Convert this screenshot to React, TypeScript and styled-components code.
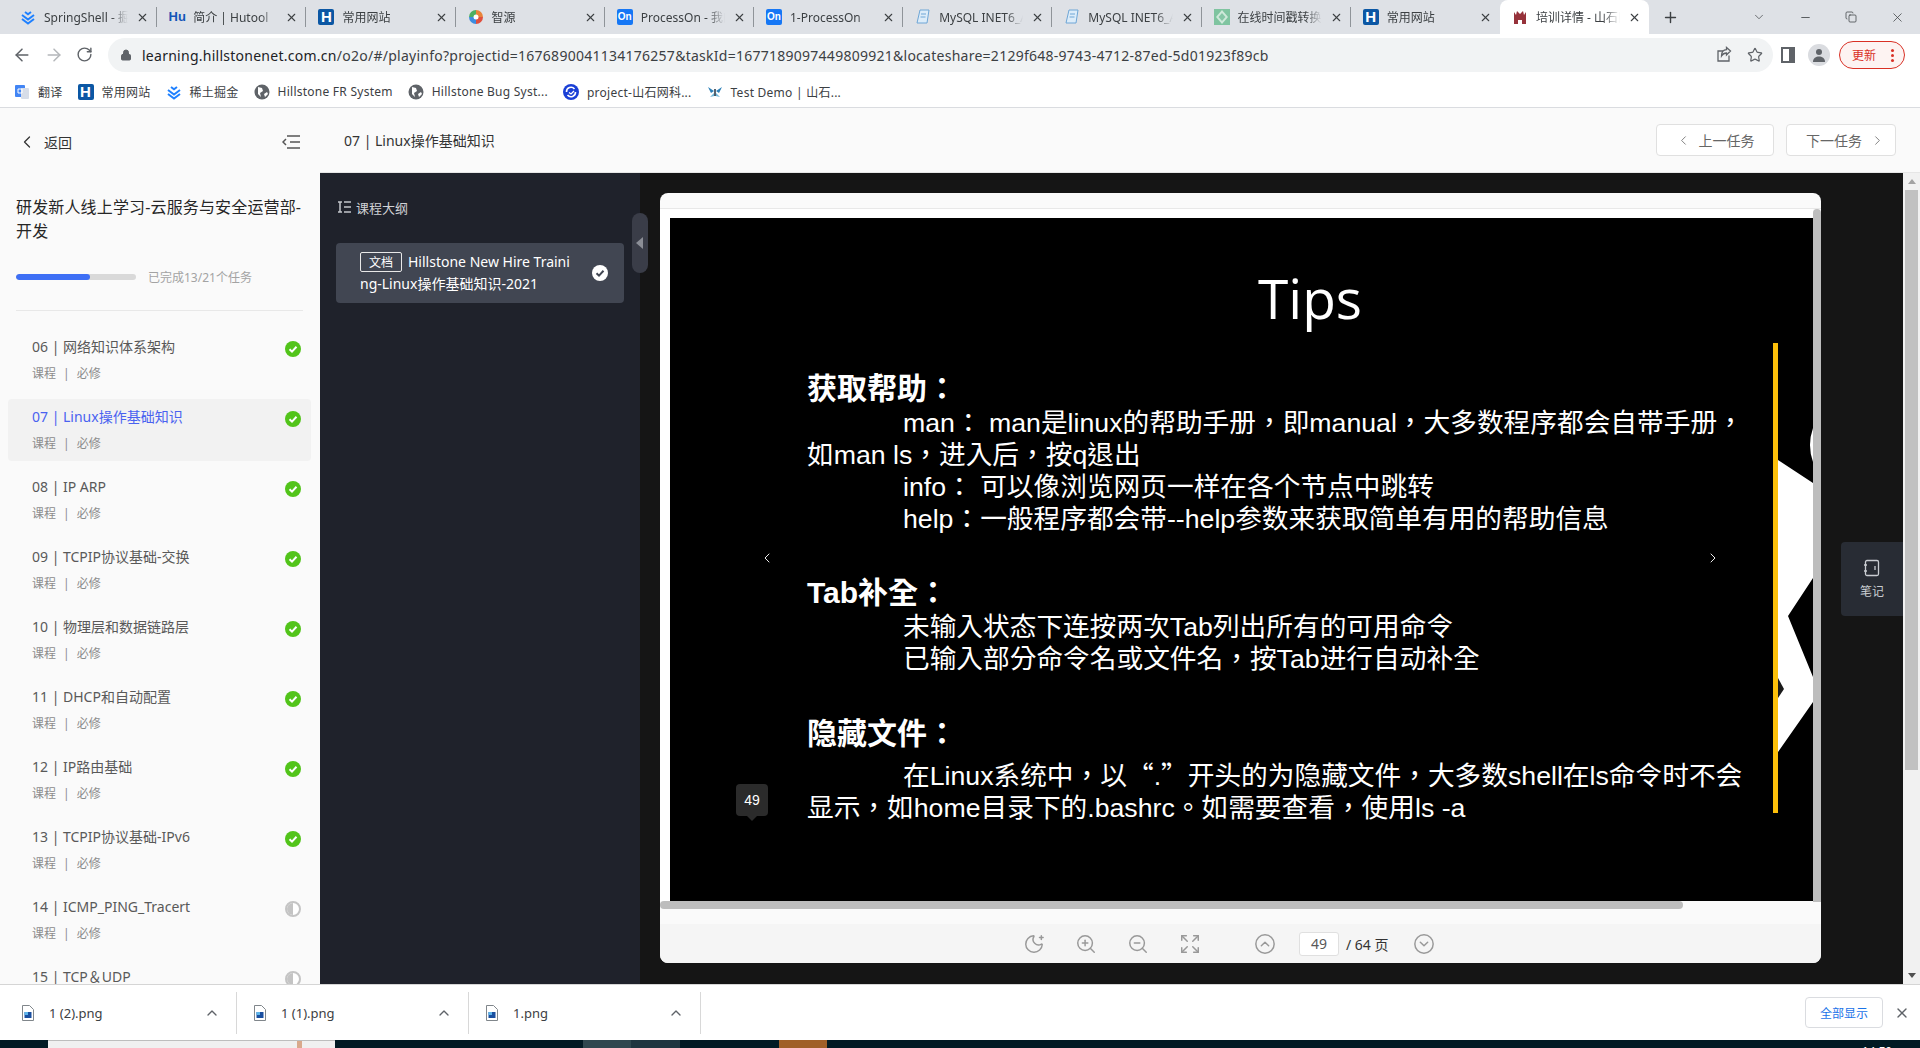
import React from 'react';
import styled, { createGlobalStyle } from 'styled-components';
import {
    ArrowLeft,
    ArrowRight,
    ChevronDown,
    ChevronLeft,
    ChevronRight,
    ChevronUp,
    CircleChevronDown,
    CircleChevronUp,
    Copy,
    Expand,
    Lock,
    Minus,
    MoonStar,
    Plus,
    RotateCw,
    Star,
    X,
    ZoomIn,
    ZoomOut,
} from 'lucide-react';

const uiFont = `"Noto Sans", "Noto Sans CJK SC", sans-serif`;
const slideFont = `"Liberation Sans", "Noto Sans CJK TC", sans-serif`;

const GlobalStyle = createGlobalStyle`
    html, body {
        margin: 0;
        padding: 0;
        background: #fff;
        overflow: hidden;
    }
    * {
        box-sizing: border-box;
    }
`;

const Page = styled.div`
    width: 1920px;
    height: 1048px;
    display: flex;
    flex-direction: column;
    overflow: hidden;
    font-family: ${uiFont};
`;

/* ---------- browser chrome ---------- */

const TabStrip = styled.div`
    height: 34px;
    flex: none;
    display: flex;
    background: #dee1e6;
    padding-left: 8px;
`;

const Tab = styled.div<{ $active?: boolean; $sep?: boolean }>`
    width: 149.2px;
    flex: none;
    display: flex;
    align-items: center;
    position: relative;
    padding: 0 8px 0 12px;
    gap: 8px;
    font-size: 12px;
    color: #3c4043;
    background: ${(p) => (p.$active ? '#fff' : 'transparent')};
    border-radius: ${(p) => (p.$active ? '8px 8px 0 0' : '0')};
    &::after {
        content: '';
        display: ${(p) => (p.$sep ? 'block' : 'none')};
        position: absolute;
        right: 0;
        top: 7px;
        height: 20px;
        width: 1px;
        background: #8f9499;
    }
`;

const TabTitle = styled.span`
    flex: 1;
    white-space: nowrap;
    overflow: hidden;
    mask-image: linear-gradient(to right, #000 80%, transparent 100%);
`;

const NewTab = styled.div`
    width: 42px;
    display: flex;
    align-items: center;
    justify-content: center;
    color: #3c4043;
`;

const WindowControls = styled.div`
    margin-left: auto;
    display: flex;
    align-items: center;
    color: #3c4043;
`;

const WindowButton = styled.div`
    width: 46px;
    display: flex;
    justify-content: center;
`;

const Toolbar = styled.div`
    height: 42px;
    flex: none;
    display: flex;
    align-items: center;
    background: #fff;
    padding: 0 8px 0 12px;
    color: #5f6368;
`;

const NavIcons = styled.div`
    display: flex;
    gap: 12px;
    width: 96px;
    flex: none;
`;

const UrlPill = styled.div`
    width: 1665px;
    height: 34px;
    flex: none;
    border-radius: 17px;
    background: #f1f3f4;
    display: flex;
    align-items: center;
    padding: 0 10px 0 12px;
    gap: 10px;
`;

const UrlText = styled.span`
    flex: 1;
    font-size: 14px;
    letter-spacing: 0.26px;
    color: #3c4043;
    white-space: nowrap;
`;

const Host = styled.span`
    color: #202124;
`;

const ProfileGroup = styled.div`
    display: flex;
    align-items: center;
    margin-left: 8px;
    gap: 9px;
`;

const SidePanelIcon = styled.div`
    width: 14px;
    height: 16px;
    border: 2px solid #5f6368;
    border-right-width: 6px;
    margin-right: 4px;
`;

const Avatar = styled.div`
    width: 22px;
    height: 22px;
    border-radius: 50%;
    background: #dadce0;
    display: flex;
    align-items: center;
    justify-content: center;
`;

const UpdatePill = styled.div`
    width: 66px;
    height: 28px;
    border: 1px solid #d93025;
    border-radius: 14px;
    background: #fdf3f2;
    color: #d93025;
    font-size: 12px;
    display: flex;
    align-items: center;
    justify-content: space-between;
    padding: 0 10px 0 12px;
`;

const Dots = styled.span`
    width: 3px;
    height: 3px;
    border-radius: 50%;
    background: #d93025;
    box-shadow: 0 -5px 0 #d93025, 0 5px 0 #d93025;
`;

const BookmarkBar = styled.div`
    height: 32px;
    flex: none;
    display: flex;
    align-items: center;
    gap: 15px;
    padding-left: 14px;
    background: #fff;
    border-bottom: 1px solid #dadce0;
`;

const Bookmark = styled.div`
    display: flex;
    align-items: center;
    gap: 8px;
    font-size: 12px;
    letter-spacing: 0.25px;
    color: #3c4043;
    white-space: nowrap;
`;

const LetterIcon = styled.span<{ $bg: string; $color: string; $size: number }>`
    width: 16px;
    height: 16px;
    flex: none;
    display: inline-flex;
    align-items: center;
    justify-content: center;
    border-radius: 2px;
    background: ${(p) => p.$bg};
    color: ${(p) => p.$color};
    letter-spacing: 0;
    font: 700 ${(p) => p.$size}px/16px "Liberation Sans", sans-serif;
`;

type FavKind = 'chevrons' | 'hu' | 'h' | 'pie' | 'on' | 'doc' | 'diamond' | 'red' | 'translate' | 'globe' | 'project' | 'butterfly';

const Favicon = ({ kind }: { kind: FavKind }) => {
    if (kind === 'hu') return <LetterIcon $bg="transparent" $color="#1456b8" $size={13}>Hu</LetterIcon>;
    if (kind === 'h') return <LetterIcon $bg="#0b57a4" $color="#fff" $size={15}>H</LetterIcon>;
    if (kind === 'on') return <LetterIcon $bg="#1677f5" $color="#fff" $size={10}>On</LetterIcon>;
    return (
        <svg width="16" height="16" viewBox="0 0 16 16" style={{ flex: 'none' }}>
            {kind === 'chevrons' && (
                <g fill="none" stroke="#1e80ff" strokeWidth="2">
                    <path d="M2 6l6 4.5L14 6" />
                    <path d="M5 3l3 2.3L11 3" />
                    <path d="M2 10l6 4.5 6-4.5" />
                </g>
            )}
            {kind === 'pie' && (
                <g>
                    <path d="M8 1a7 7 0 0 1 7 7H8z" fill="#e8833a" />
                    <path d="M15 8a7 7 0 0 1-7 7V8z" fill="#e04f3e" />
                    <path d="M8 15a7 7 0 0 1-7-7h7z" fill="#3d8de0" />
                    <path d="M1 8a7 7 0 0 1 7-7v7z" fill="#4caf62" />
                    <circle cx="8" cy="8" r="2.5" fill="#fff" />
                </g>
            )}
            {kind === 'doc' && (
                <g>
                    <path d="M5 1h9l-2 13H2z" fill="#dcecf9" stroke="#6ea6d6" />
                    <path d="M6 5h5M5.500 8h5" stroke="#6ea6d6" />
                </g>
            )}
            {kind === 'diamond' && (
                <g>
                    <rect width="16" height="16" fill="#7fc4a0" />
                    <path d="M8 1l6 7-6 7-6-7z" fill="#cfe9da" />
                    <path d="M8 4l3.500 4L8 12 4.500 8z" fill="#86c6a6" />
                </g>
            )}
            {kind === 'red' && (
                <path d="M2 15V3l2 3 1-4 3 3 3-3 1 4 2-3v12h-4v-4H6v4z" fill="#96323a" />
            )}
            {kind === 'translate' && (
                <g>
                    <rect x="1" y="1" width="10" height="12" rx="1" fill="#4285f4" />
                    <rect x="7" y="4" width="8" height="11" rx="1" fill="#d7dde8" />
                    <path d="M4 5h4v4H4z" fill="none" stroke="#fff" />
                </g>
            )}
            {kind === 'globe' && (
                <g>
                    <circle cx="8" cy="8" r="7.500" fill="#5f6368" />
                    <path d="M4 3l4 1 1 3-3 2 1 4-3-3zM10 10l3-2 1 2-3 3z" fill="#fff" />
                </g>
            )}
            {kind === 'project' && (
                <g>
                    <circle cx="8" cy="8" r="8" fill="#1a3fd6" />
                    <path d="M3.500 8a4.500 4.500 0 0 1 8-3M12.500 8a4.500 4.500 0 0 1-8 3" fill="none" stroke="#fff" strokeWidth="1.600" />
                    <path d="M6 8.500l2 1.500 3-3" fill="none" stroke="#fff" strokeWidth="1.300" />
                </g>
            )}
            {kind === 'butterfly' && (
                <g>
                    <path d="M1 3l6 4-3 2zM15 3L9 7l3 2z" fill="#2a7fb8" />
                    <path d="M3 13l4-4 .5 3zM13 13L9 9l-.5 3z" fill="#6fb6d8" />
                    <rect x="7.300" y="5" width="1.400" height="7" fill="#123" />
                </g>
            )}
        </svg>
    );
};

/* ---------- main area ---------- */

const Main = styled.div`
    height: 876px;
    flex: none;
    display: flex;
`;

const Sidebar = styled.aside`
    width: 320px;
    flex: none;
    background: #fafafa;
    overflow: hidden;
`;

const BackRow = styled.div`
    height: 68px;
    display: flex;
    align-items: center;
    padding: 0 20px 0 17px;
    font-size: 14px;
    color: #333;
    gap: 7px;
`;

const BackLabel = styled.span`
    flex: 1;
`;

const CourseTitle = styled.h1`
    margin: 19px 16px 0;
    font-size: 16px;
    font-weight: 400;
    line-height: 24px;
    letter-spacing: 0.15px;
    color: #262626;
`;

const ProgressRow = styled.div`
    margin: 26px 16px 0;
    height: 16px;
    display: flex;
    align-items: center;
    gap: 12px;
`;

const ProgressTrack = styled.div`
    width: 120px;
    height: 6px;
    border-radius: 3px;
    background: #d9d9d9;
    overflow: hidden;
`;

const ProgressFill = styled.div`
    height: 100%;
    background: #3e6ff5;
    border-radius: 3px;
`;

const ProgressText = styled.span`
    font-size: 12px;
    color: #a3a3a3;
`;

const Divider = styled.div`
    margin: 25px 17px 18px 16px;
    height: 1px;
    background: #e8e8e8;
`;

const TaskList = styled.div`
    display: flex;
    flex-direction: column;
    gap: 8px;
    margin: 0 9px 0 8px;
`;

const TaskItem = styled.div<{ $active?: boolean }>`
    height: 62px;
    flex: none;
    display: flex;
    justify-content: space-between;
    align-items: flex-start;
    padding: 8px 10px 0 24px;
    border-radius: 4px;
    background: ${(p) => (p.$active ? '#f2f2f2' : 'transparent')};
`;

const TaskName = styled.div<{ $active?: boolean }>`
    font-size: 14px;
    line-height: 20px;
    color: ${(p) => (p.$active ? '#4a62f0' : '#595959')};
`;

const TaskMeta = styled.div`
    margin-top: 9px;
    font-size: 12px;
    line-height: 16px;
    color: #8c8c8c;
    word-spacing: 4px;
`;

const StatusSlot = styled.div`
    margin-top: 4px;
    width: 16px;
    height: 16px;
    flex: none;
`;

const Done = ({ fill, tick }: { fill: string; tick: string }) => (
    <svg width="16" height="16" viewBox="0 0 16 16" style={{ display: 'block', flex: 'none' }}>
        <circle cx="8" cy="8" r="8" fill={fill} />
        <path d="M4.500 8.200l2.500 2.400 4.500-4.800" fill="none" stroke={tick} strokeWidth="2" />
    </svg>
);

const Partial = () => (
    <svg width="16" height="16" viewBox="0 0 16 16" style={{ display: 'block' }}>
        <circle cx="8" cy="8" r="7" fill="#fff" stroke="#c4c4c4" strokeWidth="2" />
        <path d="M8 2a6 6 0 0 0 0 12z" fill="#c4c4c4" />
    </svg>
);

const Content = styled.div`
    flex: 1;
    display: flex;
    flex-direction: column;
    min-width: 0;
`;

const ContentHeader = styled.header`
    height: 65px;
    flex: none;
    display: flex;
    align-items: center;
    padding: 0 24px;
    background: #fafafa;
    border-bottom: 1px solid #e6e6e6;
`;

const HeaderTitle = styled.div`
    flex: 1;
    font-size: 14px;
    color: #333;
`;

const TaskButton = styled.button<{ $w: number; $ml?: number; $pl?: number }>`
    width: ${(p) => p.$w}px;
    margin-left: ${(p) => p.$ml ?? 0}px;
    height: 32px;
    display: flex;
    align-items: center;
    justify-content: center;
    gap: 8px;
    padding: 0 0 0 ${(p) => p.$pl ?? 0}px;
    background: #fff;
    border: 1px solid #e0e0e0;
    border-radius: 4px;
    font-family: ${uiFont};
    font-size: 14px;
    color: #666;
`;

const Body = styled.div`
    flex: 1;
    display: flex;
    min-height: 0;
`;

const Outline = styled.section`
    width: 320px;
    flex: none;
    position: relative;
    background: #1f222b;
    padding: 0 16px;
`;

const OutlineHead = styled.div`
    height: 70px;
    display: flex;
    align-items: center;
    padding: 0 2px 2px;
    gap: 5px;
    font-size: 13px;
    color: #d0d2d6;
`;

const LessonCard = styled.div`
    height: 60px;
    background: #414652;
    border-radius: 4px;
    display: flex;
    align-items: center;
    padding: 0 16px 0 24px;
    gap: 20px;
`;

const LessonText = styled.div`
    width: 212px;
    flex: none;
    font-size: 14px;
    line-height: 22px;
    color: #fff;
    word-break: break-all;
`;

const DocBadge = styled.span`
    display: inline-block;
    width: 42px;
    height: 20px;
    margin-right: 6px;
    border: 1px solid #e8e8e8;
    border-radius: 2px;
    font-size: 12px;
    line-height: 19px;
    text-align: center;
`;

const CollapseHandle = styled.div`
    position: absolute;
    right: -8px;
    top: 40px;
    width: 16px;
    height: 60px;
    border-radius: 8px;
    background: #3a3d48;
    display: flex;
    align-items: center;
    justify-content: center;
    z-index: 2;
    &::before {
        content: '';
        border: 6px solid transparent;
        border-left-width: 0;
        border-right: 7px solid #8b8e96;
        margin-left: -2px;
    }
`;

const Viewer = styled.section`
    flex: 1;
    min-width: 0;
    position: relative;
    background: #151515;
    padding: 20px 82px 21px 20px;
    display: flex;
`;

const NoteButton = styled.div`
    position: absolute;
    right: 0;
    top: 369px;
    width: 62px;
    height: 74px;
    background: #282c34;
    border-radius: 4px 0 0 4px;
    display: flex;
    flex-direction: column;
    align-items: center;
    justify-content: center;
    gap: 5px;
    font-size: 12px;
    color: #c9ccd1;
`;

const DocCard = styled.div`
    flex: 1;
    display: flex;
    flex-direction: column;
    background: #fafafa;
    border-radius: 8px;
    overflow: hidden;
`;

const DocTop = styled.div`
    height: 16px;
    flex: none;
    border-bottom: 1px solid #e8e8e8;
`;

const DocMiddle = styled.div`
    flex: 1;
    display: flex;
    min-height: 0;
`;

const DocScroll = styled.div`
    flex: 1;
    min-width: 0;
    display: flex;
    flex-direction: column;
`;

const SlideGutter = styled.div`
    height: 692px;
    flex: none;
    background: #fff;
    padding: 9px 0 0 10px;
`;

const Slide = styled.div`
    position: relative;
    height: 683px;
    background: #000;
    color: #fff;
    overflow: hidden;
    font-family: ${slideFont};
    padding: 40px 0 0 137px;
`;

const SlideTitle = styled.div`
    margin-left: 451px;
    font-family: "Open Sans", sans-serif;
    font-weight: 400;
    font-size: 55px;
    line-height: 80px;
    height: 80px;
`;

const SlideSection = styled.div<{ $top: number }>`
    margin-top: ${(p) => p.$top}px;
`;

const SlideHeading = styled.div<{ $after: number }>`
    font-size: 30px;
    font-weight: 700;
    line-height: 36px;
    margin-bottom: ${(p) => p.$after}px;
`;

const SlideLine = styled.div<{ $indent?: boolean }>`
    font-size: 26.7px;
    line-height: 32px;
    white-space: nowrap;
    margin-left: ${(p) => (p.$indent ? '96px' : '0')};
`;

const WideQuote = styled.span`
    font-family: "Noto Sans CJK TC", sans-serif;
`;

const SlideArrow = styled.div<{ $side: 'left' | 'right' }>`
    position: absolute;
    top: 332px;
    ${(p) => (p.$side === 'left' ? 'left: 89px;' : 'right: 92px;')}
    color: #fff;
    line-height: 0;
`;

const PageBubble = styled.div`
    position: absolute;
    left: 66px;
    top: 566px;
    width: 32px;
    height: 32px;
    border-radius: 4px;
    background: #2b2b2b;
    font-size: 14px;
    line-height: 32px;
    text-align: center;
    color: #fff;
    &::after {
        content: '';
        position: absolute;
        left: 11px;
        top: 32px;
        border: 5px solid transparent;
        border-top-color: #2b2b2b;
        border-bottom-width: 0;
    }
`;

const AccentBar = styled.div`
    position: absolute;
    left: 1103px;
    top: 125px;
    width: 5px;
    height: 470px;
    background: #fcbf0a;
    z-index: 1;
`;

const SlideArt = styled.svg`
    position: absolute;
    left: 1108px;
    top: 125px;
`;

const HorizontalThumb = styled.div`
    height: 8px;
    width: 1023px;
    flex: none;
    border-radius: 4px;
    background: #bdbdbd;
`;

const VerticalThumb = styled.div`
    width: 8px;
    height: 693px;
    flex: none;
    border-radius: 4px 4px 0 0;
    background: #bdbdbd;
`;

const DocToolbar = styled.div`
    height: 39px;
    flex: none;
    background: #f5f5f5;
    display: flex;
    align-items: center;
    padding-left: 363px;
    color: #999;
`;

const ToolGroup = styled.div`
    display: flex;
    align-items: center;
    gap: 30px;
    margin-right: 53px;
`;

const PageInput = styled.div`
    width: 40px;
    height: 24px;
    margin: 0 7px 0 23px;
    background: #fff;
    border: 1px solid #e0e0e0;
    border-radius: 3px;
    font-size: 14px;
    line-height: 22px;
    text-align: center;
    color: #595959;
`;

const PageTotal = styled.span`
    width: 45px;
    margin-right: 22px;
    font-size: 14px;
    color: #333;
    white-space: nowrap;
`;

const PageScrollbar = styled.div`
    width: 17px;
    flex: none;
    background: #f1f1f1;
    display: flex;
    flex-direction: column;
    align-items: center;
    position: relative;
    padding-top: 17px;
`;

const PageThumb = styled.div`
    width: 13px;
    height: 580px;
    background: #c1c1c1;
`;

const ScrollArrow = styled.div<{ $dir: 'up' | 'down' }>`
    position: absolute;
    ${(p) => (p.$dir === 'up' ? 'top: 6px;' : 'bottom: 6px;')}
    border-left: 4px solid transparent;
    border-right: 4px solid transparent;
    ${(p) => (p.$dir === 'up' ? 'border-bottom: 5px solid #a3a3a3;' : 'border-top: 5px solid #505050;')}
`;

/* ---------- bottom ---------- */

const DownloadBar = styled.div`
    height: 56px;
    flex: none;
    display: flex;
    align-items: center;
    padding-left: 5px;
    background: #fff;
    border-top: 1px solid #d5d5d5;
`;

const DownloadItem = styled.div`
    width: 232px;
    height: 42px;
    flex: none;
    display: flex;
    align-items: center;
    padding: 0 16px 0 17px;
    gap: 15px;
    border-right: 1px solid #d8d8d8;
    font-size: 13px;
    color: #3c4043;
    margin-top: 1px;
`;

const FileName = styled.span`
    flex: 1;
`;

const ShowAll = styled.button`
    margin-left: auto;
    width: 78px;
    height: 31px;
    background: #fff;
    border: 1px solid #dadce0;
    border-radius: 4px;
    font-family: ${uiFont};
    font-size: 12px;
    color: #1a73e8;
    padding: 0;
`;

const CloseBar = styled.div`
    width: 37px;
    display: flex;
    justify-content: center;
    color: #5f6368;
`;

const Taskbar = styled.div`
    height: 8px;
    flex: none;
    display: flex;
    background: #011a24;
    overflow: hidden;
`;

const TaskbarSlot = styled.div<{ $w: number; $bg: string; $ml?: number }>`
    width: ${(p) => p.$w}px;
    margin-left: ${(p) => p.$ml ?? 0}px;
    flex: none;
    background: ${(p) => p.$bg};
`;

const PreviewStrip = styled(TaskbarSlot)`
    border-top: 1px solid #bdbdbd;
    padding-left: 249px;
`;

const PreviewSpot = styled.div`
    width: 5px;
    height: 8px;
    background: #d9a98c;
`;

const TrayClock = styled.div`
    margin-left: 1035px;
    margin-top: 5px;
    font-family: "Liberation Sans", sans-serif;
    font-size: 12px;
    line-height: 14px;
    color: #fff;
`;

const tabs: { title: string; icon: FavKind; sep?: boolean; active?: boolean }[] = [
    { title: 'SpringShell - 掘金', icon: 'chevrons', sep: true },
    { title: '简介 | Hutool', icon: 'hu', sep: true },
    { title: '常用网站', icon: 'h', sep: true },
    { title: '智源', icon: 'pie', sep: true },
    { title: 'ProcessOn - 我的', icon: 'on', sep: true },
    { title: '1-ProcessOn', icon: 'on', sep: true },
    { title: 'MySQL INET6_ATON', icon: 'doc', sep: true },
    { title: 'MySQL INET6_ATON', icon: 'doc', sep: true },
    { title: '在线时间戳转换工具', icon: 'diamond', sep: true },
    { title: '常用网站', icon: 'h' },
    { title: '培训详情 - 山石网科', icon: 'red', active: true },
];

const bookmarks: { title: string; icon: FavKind }[] = [
    { title: '翻译', icon: 'translate' },
    { title: '常用网站', icon: 'h' },
    { title: '稀土掘金', icon: 'chevrons' },
    { title: 'Hillstone FR System', icon: 'globe' },
    { title: 'Hillstone Bug Syst...', icon: 'globe' },
    { title: 'project-山石网科...', icon: 'project' },
    { title: 'Test Demo | 山石...', icon: 'butterfly' },
];

const tasks = [
    { name: '06 | 网络知识体系架构', done: true },
    { name: '07 | Linux操作基础知识', done: true, active: true },
    { name: '08 | IP ARP', done: true },
    { name: '09 | TCPIP协议基础-交换', done: true },
    { name: '10 | 物理层和数据链路层', done: true },
    { name: '11 | DHCP和自动配置', done: true },
    { name: '12 | IP路由基础', done: true },
    { name: '13 | TCPIP协议基础-IPv6', done: true },
    { name: '14 | ICMP_PING_Tracert', done: false },
    { name: '15 | TCP＆UDP', done: false },
];

const downloads = ['1 (2).png', '1 (1).png', '1.png'];

const FileIcon = () => (
    <svg width="12" height="16" viewBox="0 0 12 16" style={{ flex: 'none' }}>
        <path d="M.5.500h7l4 4v11H.5z" fill="#fff" stroke="#80868b" />
        <rect x="2.500" y="7" width="7" height="6" fill="#1a4fa0" />
        <rect x="2.500" y="7" width="3.500" height="3" fill="#5cb4ea" />
    </svg>
);

const App: React.FC = () => {
    return (
        <Page>
            <GlobalStyle />
            <TabStrip>
                {tabs.map((t, i) => (
                    <Tab key={i} $active={t.active} $sep={t.sep}>
                        <Favicon kind={t.icon} />
                        <TabTitle>{t.title}</TabTitle>
                        <X size={13} strokeWidth={2} />
                    </Tab>
                ))}
                <NewTab>
                    <Plus size={17} strokeWidth={2} />
                </NewTab>
                <WindowControls>
                    <WindowButton>
                        <ChevronDown size={14} strokeWidth={1.2} />
                    </WindowButton>
                    <WindowButton>
                        <Minus size={13} strokeWidth={1.5} />
                    </WindowButton>
                    <WindowButton>
                        <Copy size={12} strokeWidth={1.5} />
                    </WindowButton>
                    <WindowButton>
                        <X size={15} strokeWidth={1.2} />
                    </WindowButton>
                </WindowControls>
            </TabStrip>

            <Toolbar>
                <NavIcons>
                    <ArrowLeft size={20} strokeWidth={1.8} />
                    <ArrowRight size={20} strokeWidth={1.8} color="#b4b7ba" />
                    <RotateCw size={17} strokeWidth={2} style={{ marginTop: 1 }} />
                </NavIcons>
                <UrlPill>
                    <Lock size={12} fill="#5f6368" strokeWidth={2} />
                    <UrlText>
                        <Host>learning.hillstonenet.com.cn</Host>
                        /o2o/#/playinfo?projectid=1676890041134176257&taskId=1677189097449809921&locateshare=2129f648-9743-4712-87ed-5d01923f89cb
                    </UrlText>
                    <svg width="18" height="18" viewBox="0 0 18 18" fill="none" stroke="#5f6368" strokeWidth="1.300" style={{ marginRight: 4 }}>
                        <path d="M14 9.500V15H3V5h5" />
                        <path d="M15.500 5l-4-3.500v2.200C8 4 6.500 6.500 6.500 10c1.200-2 2.700-3 5-3v2z" />
                    </svg>
                    <Star size={16} strokeWidth={1.8} />
                </UrlPill>
                <ProfileGroup>
                    <SidePanelIcon />
                    <Avatar>
                        <svg width="14" height="14" viewBox="0 0 14 14" fill="#5f6368">
                            <circle cx="7" cy="4" r="3" />
                            <path d="M1 14c0-4 3-5.500 6-5.500s6 1.500 6 5.500z" />
                        </svg>
                    </Avatar>
                    <UpdatePill>
                        更新
                        <Dots />
                    </UpdatePill>
                </ProfileGroup>
            </Toolbar>

            <BookmarkBar>
                {bookmarks.map((b) => (
                    <Bookmark key={b.title}>
                        <Favicon kind={b.icon} />
                        {b.title}
                    </Bookmark>
                ))}
            </BookmarkBar>

            <Main>
                <Sidebar>
                    <BackRow>
                        <ChevronLeft size={20} strokeWidth={1.5} color="#333" />
                        <BackLabel>返回</BackLabel>
                        <svg width="18" height="14" viewBox="0 0 18 14" fill="none" stroke="#555" strokeWidth="1.500">
                            <path d="M5 1H18M8 7H18M5 13H18" />
                            <path d="M4 4L1 7l3 3" />
                        </svg>
                    </BackRow>
                    <CourseTitle>研发新人线上学习-云服务与安全运营部-开发</CourseTitle>
                    <ProgressRow>
                        <ProgressTrack>
                            <ProgressFill style={{ width: `${(13 / 21) * 100}%` }} />
                        </ProgressTrack>
                        <ProgressText>已完成13/21个任务</ProgressText>
                    </ProgressRow>
                    <Divider />
                    <TaskList>
                        {tasks.map((t) => (
                            <TaskItem key={t.name} $active={t.active}>
                                <div>
                                    <TaskName $active={t.active}>{t.name}</TaskName>
                                    <TaskMeta>课程 | 必修</TaskMeta>
                                </div>
                                <StatusSlot>
                                    {t.done ? <Done fill="#52c41a" tick="#fff" /> : <Partial />}
                                </StatusSlot>
                            </TaskItem>
                        ))}
                    </TaskList>
                </Sidebar>

                <Content>
                    <ContentHeader>
                        <HeaderTitle>07 | Linux操作基础知识</HeaderTitle>
                        <TaskButton $w={118}>
                            <ChevronLeft size={15} strokeWidth={1.3} />
                            上一任务
                        </TaskButton>
                        <TaskButton $w={110} $ml={12} $pl={9}>
                            下一任务
                            <ChevronRight size={15} strokeWidth={1.3} />
                        </TaskButton>
                    </ContentHeader>
                    <Body>
                        <Outline>
                            <OutlineHead>
                                <svg width="13" height="12" viewBox="0 0 13 12" fill="none" stroke="#c4c6cb" strokeWidth="1.500">
                                    <path d="M0 1h4M2 1v10M0 11h4M6 1h7M6 6h7M6 11h7" />
                                </svg>
                                课程大纲
                            </OutlineHead>
                            <LessonCard>
                                <LessonText>
                                    <DocBadge>文档</DocBadge>
                                    Hillstone New Hire Training-Linux操作基础知识-2021
                                </LessonText>
                                <Done fill="#fff" tick="#414652" />
                            </LessonCard>
                            <CollapseHandle />
                        </Outline>
                        <Viewer>
                            <DocCard>
                                <DocTop />
                                <DocMiddle>
                                    <DocScroll>
                                        <SlideGutter>
                                            <Slide>
                                                <SlideTitle>Tips</SlideTitle>
                                                <SlideSection $top={33}>
                                                    <SlideHeading $after={0}>获取帮助：</SlideHeading>
                                                    <SlideLine $indent>man： man是linux的帮助手册，即manual，大多数程序都会自带手册，</SlideLine>
                                                    <SlideLine>如man ls，进入后，按q退出</SlideLine>
                                                    <SlideLine $indent>info： 可以像浏览网页一样在各个节点中跳转</SlideLine>
                                                    <SlideLine $indent>help：一般程序都会带--help参数来获取简单有用的帮助信息</SlideLine>
                                                </SlideSection>
                                                <SlideSection $top={40}>
                                                    <SlideHeading $after={0}>Tab补全：</SlideHeading>
                                                    <SlideLine $indent>未输入状态下连按两次Tab列出所有的可用命令</SlideLine>
                                                    <SlideLine $indent>已输入部分命令名或文件名，按Tab进行自动补全</SlideLine>
                                                </SlideSection>
                                                <SlideSection $top={41}>
                                                    <SlideHeading $after={6}>隐藏文件：</SlideHeading>
                                                    <SlideLine $indent>
                                                        在Linux系统中，以<WideQuote>“</WideQuote>.<WideQuote>”</WideQuote>开头的为隐藏文件，大多数shell在ls命令时不会
                                                    </SlideLine>
                                                    <SlideLine>显示，如home目录下的.bashrc。如需要查看，使用ls -a</SlideLine>
                                                </SlideSection>
                                                <SlideArrow $side="left">
                                                    <ChevronLeft size={16} strokeWidth={1.4} />
                                                </SlideArrow>
                                                <SlideArrow $side="right">
                                                    <ChevronRight size={16} strokeWidth={1.4} />
                                                </SlideArrow>
                                                <PageBubble>49</PageBubble>
                                                <AccentBar />
                                                <SlideArt width="35" height="470" viewBox="0 0 35 470">
                                                    <path d="M35 85Q29 102 35 119z" fill="#fff" />
                                                    <path d="M0 117L35 140V235L10 273 35 334V359L0 409z" fill="#fff" />
                                                    <path d="M0 335L6 346 0 355z" fill="#1a1a1a" />
                                                </SlideArt>
                                            </Slide>
                                        </SlideGutter>
                                        <HorizontalThumb />
                                    </DocScroll>
                                    <VerticalThumb />
                                </DocMiddle>
                                <DocToolbar>
                                    <ToolGroup>
                                        <MoonStar size={22} strokeWidth={1.6} />
                                        <ZoomIn size={22} strokeWidth={1.6} />
                                        <ZoomOut size={22} strokeWidth={1.6} />
                                        <Expand size={22} strokeWidth={1.6} />
                                    </ToolGroup>
                                    <CircleChevronUp size={22} strokeWidth={1.6} />
                                    <PageInput>49</PageInput>
                                    <PageTotal>/ 64 页</PageTotal>
                                    <CircleChevronDown size={22} strokeWidth={1.6} />
                                </DocToolbar>
                            </DocCard>
                            <NoteButton>
                                <svg width="18" height="18" viewBox="0 0 18 18" fill="none" stroke="#c9ccd1" strokeWidth="1.300">
                                    <rect x="2.500" y="1.500" width="13" height="15" rx="1.500" />
                                    <path d="M1 6h3M1 12h3M12 7v4" />
                                </svg>
                                笔记
                            </NoteButton>
                        </Viewer>
                        <PageScrollbar>
                            <ScrollArrow $dir="up" />
                            <PageThumb />
                            <ScrollArrow $dir="down" />
                        </PageScrollbar>
                    </Body>
                </Content>
            </Main>

            <DownloadBar>
                {downloads.map((d) => (
                    <DownloadItem key={d}>
                        <FileIcon />
                        <FileName>{d}</FileName>
                        <ChevronUp size={16} strokeWidth={2} color="#5f6368" />
                    </DownloadItem>
                ))}
                <ShowAll>全部显示</ShowAll>
                <CloseBar>
                    <X size={16} strokeWidth={2} />
                </CloseBar>
            </DownloadBar>

            <Taskbar>
                <PreviewStrip $w={287} $ml={48} $bg="#f0f0f0">
                    <PreviewSpot />
                </PreviewStrip>
                <TaskbarSlot $w={48} $ml={248} $bg="#2f474f" />
                <TaskbarSlot $w={49} $bg="#1f3540" />
                <TaskbarSlot $w={48} $ml={99} $bg="#a05f28" />
                <TrayClock>14:50</TrayClock>
            </Taskbar>
        </Page>
    );
};

export default App;
